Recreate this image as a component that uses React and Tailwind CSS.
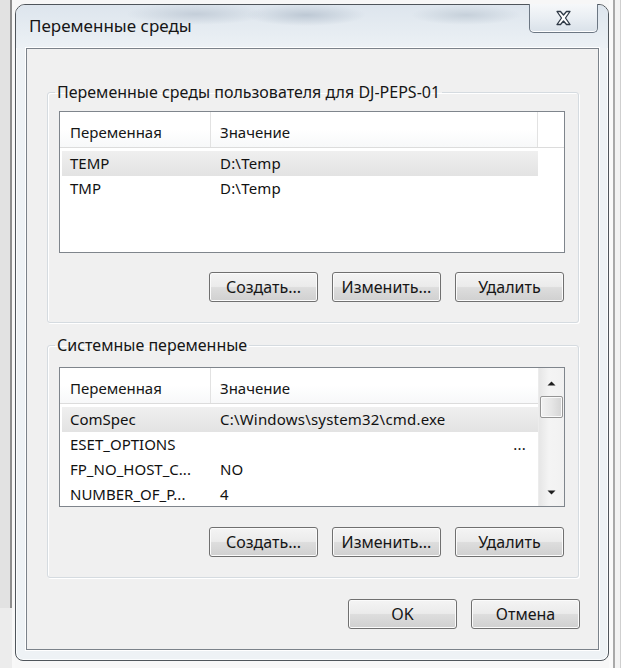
import React from "react";

const font = "font-['Noto_Sans','Open_Sans',sans-serif]";

const userVars = [
  { name: "TEMP", value: "D:\\Temp", selected: true },
  { name: "TMP", value: "D:\\Temp" },
];

const systemVars = [
  { name: "ComSpec", value: "C:\\Windows\\system32\\cmd.exe", selected: true },
  { name: "ESET_OPTIONS", value: "...", right: true },
  { name: "FP_NO_HOST_C...", value: "NO" },
  { name: "NUMBER_OF_P...", value: "4" },
];

const WinButton = ({ children, className = "" }) => (
  <button
    className={
      "w-[109px] h-[30px] rounded-[3px] border border-[#707070] text-[16px] text-[#161616] " +
      "bg-[linear-gradient(#f4f4f4_0%,#ebebeb_48%,#dddddd_52%,#d0d0d0_100%)] shadow-[inset_0_0_0_1px_#fbfbfb] " +
      className
    }
  >
    {children}
  </button>
);

const CloseIcon = () => (
  <svg width="19" height="16" viewBox="0 0 18 16">
    <path
      d="M2.5 1.5 H6 L9 5 L12 1.5 H15.5 L11 8 L15.5 14.5 H12 L9 11 L6 14.5 H2.5 L7 8 Z"
      fill="#ffffff"
      stroke="#2e3946"
      strokeWidth="1.3"
      strokeLinejoin="round"
    />
  </svg>
);

const Arrow = ({ down }) => (
  <svg width="9" height="5" viewBox="0 0 9 5">
    <path d={down ? "M0.5 0.5 H8.5 L4.5 4.5 Z" : "M0.5 4.5 H8.5 L4.5 0.5 Z"} fill="#1f1f1f" />
  </svg>
);

const ListHeader = ({ trailing }) => (
  <div className="flex h-[36px] border-b border-[#dcdcdc] bg-[linear-gradient(#ffffff_50%,#f7f8f9)] text-[15px] text-[#161616]">
    <div className="w-[151px] shrink-0 pl-[10px] pt-[5px] flex items-center border-r border-[#e2e2e2]">
      Переменная
    </div>
    <div className={"w-[327px] shrink-0 pl-[9px] pt-[5px] flex items-center " + (trailing ? "border-r border-[#e2e2e2]" : "")}>
      Значение
    </div>
  </div>
);

const Rows = ({ items }) => (
  <div className="pt-[3px]">
    {items.map((r) => (
      <div
        key={r.name}
        className={
          "flex h-[25px] items-center ml-[2px] w-[476px] text-[15px] text-[#111111] " +
          (r.selected ? "bg-[linear-gradient(#efefef,#e3e3e3)]" : "")
        }
      >
        <div className="w-[149px] shrink-0 pl-[8px] whitespace-nowrap">{r.name}</div>
        <div className={"flex-1 pl-[9px] whitespace-nowrap tracking-[0.2px] " + (r.right ? "text-right pr-[12px]" : "")}>
          {r.value}
        </div>
      </div>
    ))}
  </div>
);

const ScrollBar = () => (
  <div className="w-[26px] shrink-0 flex flex-col bg-[linear-gradient(90deg,#e6e6e6,#f4f4f4_40%,#f1f1f1)] border-l border-[#ececec]">
    <div className="h-[28px] flex items-center justify-center pt-[2px]">
      <Arrow />
    </div>
    <div className="mx-[1px] h-[22px] rounded-[2px] border border-[#959595] bg-[linear-gradient(90deg,#f2f2f2,#e6e6e6_50%,#d4d4d4)] shadow-[inset_0_0_0_1px_#fafafa]" />
    <div className="flex-1" />
    <div className="h-[28px] flex items-center justify-center">
      <Arrow down />
    </div>
  </div>
);

const Group = ({ label, children, className = "" }) => (
  <fieldset
    className={
      "mx-[19px] ml-[20px] border border-[#d5dbe0] rounded-[3px] shadow-[inset_1px_1px_0_#ffffff,1px_1px_0_#ffffff] pl-[11px] pr-[13px] pb-[20px] " +
      className
    }
  >
    <legend className="-ml-[4px] px-[2px] leading-[22px] text-[16px] text-[#161616]">{label}</legend>
    {children}
  </fieldset>
);

export default function App() {
  return (
    <div className={"w-[626px] h-[668px] flex bg-[#ececec] overflow-hidden " + font}>
      <div className="w-[15px] shrink-0 flex">
        <div className="w-[12px] h-[608px] bg-[#e2e2e2] border-r-2 border-[#8e8e8e]" />
        <div className="flex-1 bg-[#f8f8f8]" />
      </div>

      <div className="w-[594px] shrink-0 pt-[4px] pb-[7px] flex flex-col bg-[#f7f7f7]">
        <div className="flex-1 flex flex-col rounded-t-[10px] rounded-b-[8px] border border-[#4f555b] bg-[#eef2f5] shadow-[inset_0_0_0_1px_#fbfdfe]">
          <div className="h-[43px] flex items-start justify-between rounded-t-[9px] bg-[radial-gradient(ellipse_70px_11px_at_180px_9px,#c4ced9,transparent),radial-gradient(ellipse_60px_11px_at_290px_10px,#bdc8d4,transparent),radial-gradient(ellipse_55px_10px_at_450px_10px,#c6d0da,transparent),linear-gradient(#dde5ed,#ecf1f5)]">
            <div className="pl-[13px] pt-[9px] text-[17px] leading-[23px] text-[#161616]">
              Переменные среды
            </div>
            <div className="mr-[10px] w-[69px] h-[29px] -mt-px flex items-center justify-center rounded-b-[5px] border border-t-0 border-[#6c7783] bg-[linear-gradient(#f6f8fa,#e9eef3_50%,#d9e1e9)] shadow-[inset_0_-1px_0_#ffffff]">
              <CloseIcon />
            </div>
          </div>

          <div className="flex-1 ml-[10px] mr-[9px] mb-[10px] flex flex-col border border-[#7b828a] bg-[#f0f0f0] shadow-[0_0_0_1px_#ffffff]">
            <Group label="Переменные среды пользователя для DJ-PEPS-01" className="mt-[32px]">
              <div className="mt-[8px] h-[142px] border border-[#7f858c] bg-white overflow-hidden">
                <div className="flex">
                  <div className="w-[478px]">
                    <ListHeader trailing />
                  </div>
                  <div className="flex-1 h-[36px] border-b border-[#dcdcdc]" />
                </div>
                <Rows items={userVars} />
              </div>
              <div className="mt-[19px] flex justify-end gap-[14px] mr-px">
                <WinButton>Создать...</WinButton>
                <WinButton>Изменить...</WinButton>
                <WinButton>Удалить</WinButton>
              </div>
            </Group>

            <Group label="Системные переменные" className="mt-[11px]">
              <div className="mt-[11px] h-[140px] border border-[#7f858c] bg-white overflow-hidden flex">
                <div className="w-[478px] shrink-0">
                  <ListHeader />
                  <Rows items={systemVars} />
                </div>
                <ScrollBar />
              </div>
              <div className="mt-[20px] flex justify-end gap-[14px] mr-px">
                <WinButton>Создать...</WinButton>
                <WinButton>Изменить...</WinButton>
                <WinButton>Удалить</WinButton>
              </div>
            </Group>

            <div className="mt-[21px] mr-[18px] flex justify-end gap-[14px]">
              <WinButton>OK</WinButton>
              <WinButton>Отмена</WinButton>
            </div>
          </div>
        </div>
      </div>

      <div className="flex-1 flex bg-white">
        <div className="w-[4px] bg-[#fafafa]" />
        <div className="w-[2px] bg-[#a9a9a9]" />
        <div className="w-[5px] bg-[#f3f3f3]" />
        <div className="w-[1px] bg-[#cfcfcf]" />
        <div className="flex-1 bg-white" />
      </div>
    </div>
  );
}
